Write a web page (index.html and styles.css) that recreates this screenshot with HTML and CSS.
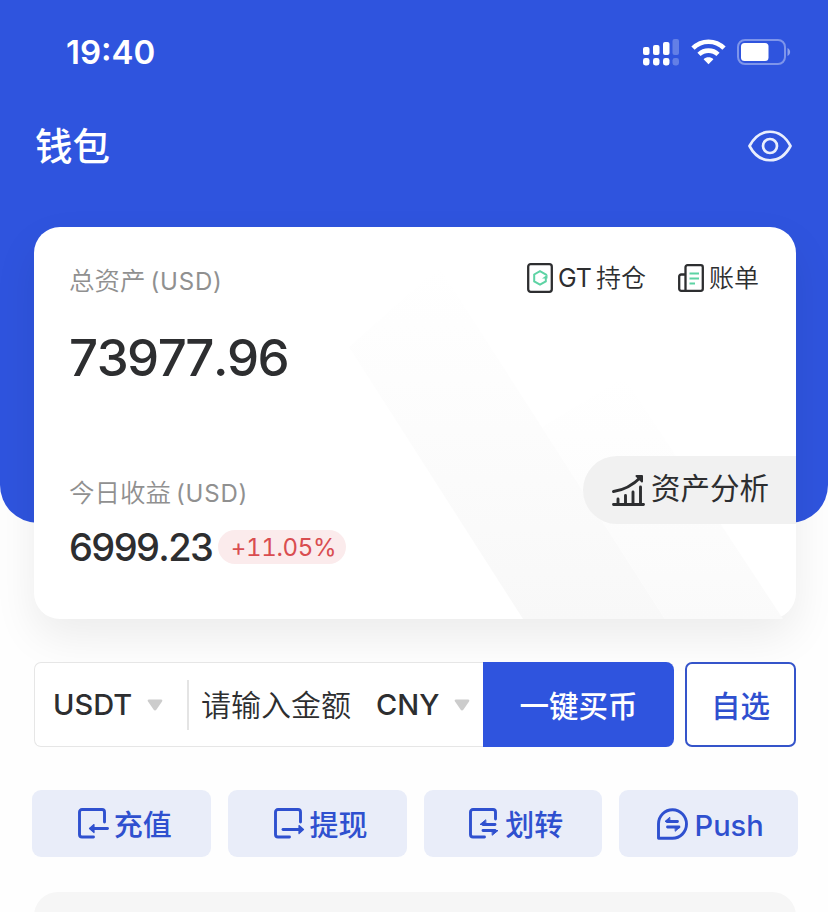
FILE: index.html
```html
<!DOCTYPE html>
<html lang="zh-CN">
<head>
  <meta charset="UTF-8" />
  <meta name="viewport" content="width=device-width, initial-scale=1.0"/>
  <title>钱包</title>
  <link rel="stylesheet" href="styles.css">
</head>
<body>
  <header class="header">
    <!-- Status bar -->
    <div class="status-bar">
      <span class="time">19:40</span>
      <div class="status-icons">
        <svg class="signal" width="36" height="28" viewBox="0 0 36 28" fill="#fff">
          <rect x="0" y="9" width="6.500" height="8" rx="2"/>
          <rect x="10" y="7" width="6.500" height="10" rx="2"/>
          <rect x="20" y="4" width="6.500" height="13" rx="2"/>
          <rect x="29.500" y="1" width="6.500" height="16" rx="2" opacity=".25"/>
          <rect x="0" y="20" width="6.500" height="7.500" rx="2.400"/>
          <rect x="10" y="20" width="6.500" height="7.500" rx="2.400"/>
          <rect x="20" y="20" width="6.500" height="7.500" rx="2.400"/>
          <rect x="29.500" y="20" width="6.500" height="7.500" rx="2.400" opacity=".25"/>
        </svg>
        <svg class="wifi" width="35" height="26" viewBox="0 0 35 26" fill="none" stroke="#fff" stroke-width="4.600">
          <path d="M2 9.200C10.500 0.500 24.500 0.500 33 9.200"/>
          <path d="M8 15.400C13.300 10.300 21.700 10.300 27 15.400"/>
          <path d="M17.500 25.200L12.600 20.300C15.300 17.700 19.700 17.700 22.400 20.300Z" fill="#fff" stroke="none"/>
        </svg>
        <svg class="battery" width="54" height="26" viewBox="0 0 54 26">
          <rect x="1" y="1" width="47" height="24" rx="7" fill="none" stroke="#fff" stroke-width="2" opacity=".38"/>
          <rect x="4" y="4" width="27.500" height="18" rx="3.500" fill="#fff"/>
          <path d="M50.500 9c3.500 1.500 3.500 6.500 0 8z" fill="#fff" opacity=".45"/>
        </svg>
      </div>
    </div>

    <div class="title-bar">
      <h1>钱包</h1>
      <svg width="44" height="32" viewBox="0 0 44 32" fill="none" stroke="#e9eefd" stroke-width="2.700">
        <path d="M1.500 16C11.500-3 32.500-3 42.500 16C32.500 35 11.500 35 1.500 16Z" stroke-linejoin="round"/>
        <circle cx="22" cy="16" r="7"/>
      </svg>
    </div>
  </header>

  <main class="content">
    <!-- Assets card -->
    <section class="card">
      <svg class="card-bg" width="762" height="392" viewBox="0 0 762 392">
        <defs>
          <linearGradient id="fade" x1="0" y1="0" x2="0" y2="1">
            <stop offset="0" stop-color="#f9f9f9" stop-opacity="0"/>
            <stop offset="1" stop-color="#f8f8f8"/>
          </linearGradient>
          <linearGradient id="fadeLight" x1="0" y1="0" x2="0" y2="1">
            <stop offset="0" stop-color="#fbfbfb" stop-opacity="0"/>
            <stop offset="1" stop-color="#fafafa"/>
          </linearGradient>
        </defs>
        <path d="M315 120L405 40L631 392H489Z" fill="url(#fade)"/>
        <path d="M508 200L590 150L749 392H631Z" fill="url(#fadeLight)"/>
      </svg>

      <div class="card-top">
        <p class="label">总资产<span class="unit">(USD)</span></p>
        <div class="links">
          <a class="link" href="#">
            <svg width="26" height="30" viewBox="0 0 26 30" fill="none">
              <rect x="1.200" y="1.200" width="23.600" height="27.600" rx="2.500" stroke="#2d2e30" stroke-width="2.300"/>
              <path d="M19 12.500V11.500L13 8.200L7.200 11.500V18.300L13 21.600L18.800 18.300V15" stroke="#5dd3a4" stroke-width="2"/>
              <path d="M15 15.500L20.500 11.500V15.500Z" fill="#5dd3a4"/>
            </svg>
            <span class="link-gt">GT</span><span>持仓</span>
          </a>
          <a class="link" href="#">
            <svg width="26" height="28" viewBox="0 0 26 28" fill="none">
              <path d="M7.500 26.800V3.200a2 2 0 0 1 2-2h13.300a2 2 0 0 1 2 2v21.600a2 2 0 0 1-2 2H3.200a2 2 0 0 1-2-2V12.500a2 2 0 0 1 2-2H7" stroke="#2d2e30" stroke-width="2.300"/>
              <path d="M11.500 9.500h9.500M11.500 14.500h9.500M11.500 19.500h5.500" stroke="#5dd3a4" stroke-width="2"/>
            </svg>
            <span>账单</span>
          </a>
        </div>
      </div>
      <p class="total">73977.96</p>

      <p class="label label-today">今日收益<span class="unit">(USD)</span></p>
      <div class="today">
        <span class="profit">6999.23</span>
        <span class="badge">+11.05%</span>
      </div>

      <a class="analysis" href="#">
        <svg width="34" height="32" viewBox="0 0 34 32" fill="none" stroke="#2d2e30" stroke-width="2.900" stroke-linecap="round">
          <path d="M1.500 30.500H31.500M6 29V25M13.500 29V21.500M21 29V18M28.500 29V13"/>
          <path d="M1.500 17.500C13 16 21 11 29 3"/>
          <path d="M24.500 2H30V7.500Z" fill="#2d2e30" stroke-linejoin="round" stroke-width="2"/>
        </svg>
        <span>资产分析</span>
      </a>
    </section>

    <!-- Quick buy -->
    <section class="buy-row">
      <div class="buy-box">
        <span class="coin">USDT</span>
        <svg class="caret" width="16" height="12" viewBox="0 0 16 12"><path d="M2 .500h12q2 0 1 2L9.500 10.500Q8 12.500 6.500 10.500L1 2.500Q0 .500 2 .500Z" fill="#ccc"/></svg>
        <span class="divider"></span>
        <span class="placeholder">请输入金额</span>
        <span class="coin coin-cny">CNY</span>
        <svg class="caret" width="16" height="12" viewBox="0 0 16 12"><path d="M2 .500h12q2 0 1 2L9.500 10.500Q8 12.500 6.500 10.500L1 2.500Q0 .500 2 .500Z" fill="#ccc"/></svg>
        <button class="btn-buy">一键买币</button>
      </div>
      <button class="btn-fav">自选</button>
    </section>

    <!-- Actions -->
    <nav class="actions">
      <a class="action" href="#">
        <svg width="31" height="31" viewBox="0 0 31 31" fill="none" stroke="#2f50cf" stroke-width="2.900" stroke-linecap="round">
          <path d="M15.500 29H4a2.500 2.500 0 0 1-2.500-2.500V4A2.500 2.500 0 0 1 4 1.500H24A2.500 2.500 0 0 1 26.500 4V14"/>
          <path d="M29.500 20.500H13"/>
          <path d="M16 16.500L11.500 20.500L16 24.500Z" fill="#2f50cf" stroke-width="1.200" stroke-linejoin="round"/>
        </svg>
        <span>充值</span>
      </a>
      <a class="action" href="#">
        <svg width="31" height="31" viewBox="0 0 31 31" fill="none" stroke="#2f50cf" stroke-width="2.900" stroke-linecap="round">
          <path d="M15.500 29H4a2.500 2.500 0 0 1-2.500-2.500V4A2.500 2.500 0 0 1 4 1.500H24A2.500 2.500 0 0 1 26.500 4V14"/>
          <path d="M9 21.500H26"/>
          <path d="M25 17.500L29.500 21.500L25 25.500Z" fill="#2f50cf" stroke-width="1.200" stroke-linejoin="round"/>
        </svg>
        <span>提现</span>
      </a>
      <a class="action" href="#">
        <svg width="31" height="31" viewBox="0 0 31 31" fill="none" stroke="#2f50cf" stroke-width="2.900" stroke-linecap="round">
          <path d="M15.500 29H4a2.500 2.500 0 0 1-2.500-2.500V4A2.500 2.500 0 0 1 4 1.500H24A2.500 2.500 0 0 1 26.500 4V11"/>
          <path d="M14 16.500H26M14 22.500H26" stroke-width="2.900"/>
          <path d="M16.500 12L11 16.500H16.500ZM23.500 27L29 22.500H23.500Z" fill="#2f50cf" stroke-width="1" stroke-linejoin="round"/>
        </svg>
        <span>划转</span>
      </a>
      <a class="action action-push" href="#">
        <svg width="31" height="32" viewBox="0 0 31 32" fill="none" stroke="#2f50cf" stroke-width="2.900" stroke-linecap="round">
          <path d="M1.500 30.300V15.800A14 14.300 0 1 1 15.500 30.300Z" stroke-linejoin="round"/>
          <path d="M10 13.500H20.500M10.500 19H22" stroke-width="2.800"/>
          <path d="M12.500 9.500L8 13.500H12.500ZM18.500 23L23 19H18.500Z" fill="#2f50cf" stroke-width="1" stroke-linejoin="round"/>
        </svg>
        <span>Push</span>
      </a>
    </nav>

    <section class="panel"></section>
  </main>
</body>
</html>
```

FILE: styles.css
```css
* {
  box-sizing: border-box;
}

body {
  margin: 0;
  height: 912px;
  overflow: hidden;
  background-color: #fefefe;
  color: #2d2e30;
  font-family: Inter, "Noto Sans CJK SC", sans-serif;
}

h1,
p {
  margin: 0;
}

a {
  color: inherit;
  text-decoration: none;
}

svg {
  display: block;
  flex-shrink: 0;
}

span,
button {
  white-space: nowrap;
}

/* Header */
.header {
  height: 523px;
  background-color: #2f54de;
  border-radius: 0 0 38px 38px;
  color: #fff;
}

.status-bar {
  display: flex;
  justify-content: space-between;
  align-items: center;
  height: 104px;
  padding: 0 37px 0 66px;
}

.time {
  font-size: 33px;
  font-weight: 600;
}

.status-icons {
  display: flex;
  align-items: center;
}

.wifi {
  margin-left: 12px;
}

.battery {
  margin-left: 11px;
}

.title-bar {
  display: flex;
  justify-content: space-between;
  align-items: center;
  height: 84px;
  padding: 0 36px 0 35px;
}

h1 {
  margin-top: 2px;
  font-size: 37.5px;
  font-weight: 500;
  line-height: 50px;
}

/* Card */
.content {
  margin-top: -296px;
  padding: 0 32px 0 34px;
}

.card {
  position: relative;
  height: 392px;
  padding: 34px 37px 0 35px;
  background-color: #fff;
  border-radius: 26px;
  box-shadow: 0 18px 44px rgba(0, 0, 0, 0.075);
}

.card-bg {
  position: absolute;
  top: 0;
  left: 0;
}

.card-top,
.total,
.label-today,
.today {
  position: relative;
}

.card-top {
  display: flex;
  justify-content: space-between;
}

.label {
  height: 38px;
  line-height: 40px;
  font-size: 25.5px;
  font-weight: 350;
  color: #909090;
}

.unit {
  margin-left: 5px;
  font-size: 24px;
  font-weight: 400;
  letter-spacing: 0.8px;
}

.links {
  display: flex;
  gap: 32px;
  height: 34px;
}

.link {
  display: flex;
  align-items: center;
  font-size: 25px;
  font-weight: 350;
  line-height: 34px;
}

.link svg {
  margin-right: 5px;
}

.link-gt {
  margin-right: 4px;
  font-weight: 400;
}

.total {
  margin-top: 29px;
  height: 60px;
  line-height: 60px;
  font-size: 51px;
  font-weight: 500;
  font-kerning: none;
  letter-spacing: -1.5px;
}

.label-today {
  margin-top: 85px;
}

.today {
  display: flex;
  align-items: center;
  margin-top: 16px;
  height: 40px;
}

.profit {
  width: 144px;
  font-size: 38px;
  font-weight: 500;
  font-kerning: none;
  letter-spacing: -1.6px;
}

.badge {
  width: 128px;
  height: 34px;
  margin-left: 5px;
  padding-left: 3px;
  border-radius: 17px;
  background-color: #fbebec;
  color: #d94d50;
  font-size: 24px;
  font-variant-numeric: tabular-nums;
  font-kerning: none;
  letter-spacing: -0.3px;
  line-height: 35px;
  text-align: center;
}

.analysis {
  position: absolute;
  top: 229px;
  right: 0;
  display: flex;
  align-items: center;
  gap: 5px;
  width: 213px;
  height: 68px;
  padding-left: 29px;
  border-radius: 34px 0 0 34px;
  background-color: #f1f1f1;
  font-size: 29.5px;
  line-height: 40px;
}

.analysis span {
  margin-top: -4px;
}

/* Quick buy */
.buy-row {
  position: relative;
  display: flex;
  gap: 11px;
  margin-top: 43px;
  height: 85px;
}

.buy-box {
  display: flex;
  align-items: center;
  width: 640px;
  border: 1px solid #e6e6e6;
  border-right: none;
  border-radius: 7px;
  padding-left: 18px;
  background-color: #fff;
}

.coin {
  width: 79px;
  font-size: 29px;
  font-weight: 450;
}

.caret {
  margin-left: 15px;
}

.divider {
  width: 2px;
  height: 50px;
  margin: 0 12px 0 24px;
  background-color: #e4e4e4;
}

.placeholder {
  width: 150px;
  margin-top: -4px;
  font-size: 30px;
  font-weight: 350;
}

.coin-cny {
  width: 63px;
  margin-left: 25px;
}

button {
  font-family: inherit;
  font-size: 29.5px;
  font-weight: 500;
  padding: 0 0 2px;
}

.btn-buy {
  width: 191px;
  height: 85px;
  margin: -1px 0 -1px auto;
  border: none;
  border-radius: 0 8px 8px 0;
  background-color: #2f54de;
  color: #fff;
}

.btn-fav {
  width: 111px;
  border: 2px solid #3554ca;
  border-radius: 7px;
  background-color: #fff;
  color: #2f50cf;
}

/* Actions */
.actions {
  display: grid;
  grid-template-columns: repeat(4, 1fr);
  gap: 17px;
  margin: 43px -2px 0;
}

.action {
  display: flex;
  justify-content: center;
  align-items: center;
  gap: 5px;
  height: 67px;
  padding-left: 7px;
  border-radius: 9px;
  background-color: #e9edf9;
  color: #2f50cf;
  font-size: 29px;
  font-weight: 500;
  line-height: 40px;
}

.action span {
  margin-top: 4px;
}

.action-push {
  gap: 7px;
  padding-left: 3px;
  font-weight: 450;
}

.panel {
  height: 60px;
  margin-top: 35px;
  border-radius: 24px;
  background-color: #f6f6f6;
}
```
